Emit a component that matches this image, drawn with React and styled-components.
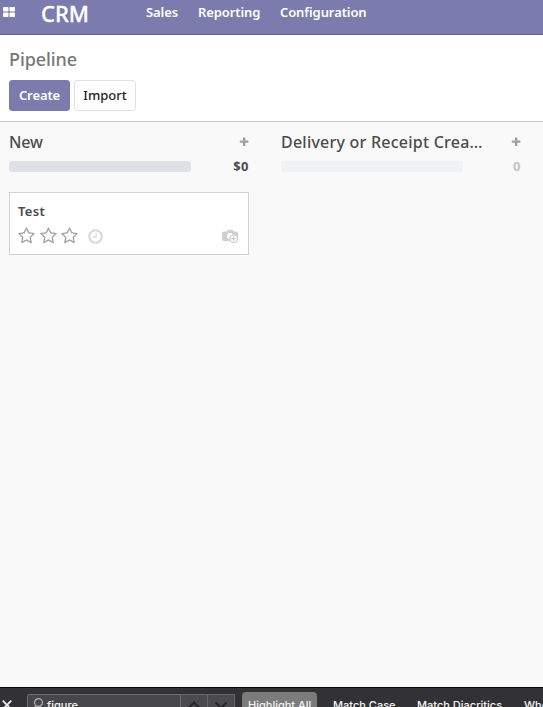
import React from "react";
import styled, { createGlobalStyle } from "styled-components";

const GlobalStyle = createGlobalStyle`
  * { box-sizing: border-box; }
  html, body { margin: 0; padding: 0; overflow: hidden; }
  body { font-family: "Noto Sans", "Open Sans", sans-serif; color: #4c4c4c; }
  svg { display: block; flex: none; }
`;

const Page = styled.div`
  display: flex;
  flex-direction: column;
  width: 543px;
  height: 707px;
  overflow: hidden;
  background: #f9f9f9;
`;

const Navbar = styled.header`
  display: flex;
  flex: none;
  height: 35px;
  padding-left: 3px;
  background: #7c7bad;
  border-bottom: 1px solid #5f5e97;
  color: #fff;
`;

const AppsIcon = styled.svg`
  margin-top: 7px;
`;

const Brand = styled.div`
  width: 105px;
  margin-left: 26px;
  font-size: 22px;
  font-weight: 500;
  line-height: 26px;
  -webkit-text-stroke: 0.3px #fff;
`;

const Menu = styled.nav`
  display: flex;
  gap: 20px;
`;

const MenuItem = styled.a`
  width: ${(p) => p.$width}px;
  font-size: 13px;
  font-weight: 600;
  line-height: 25px;
  letter-spacing: -0.1px;
  white-space: nowrap;
`;

const ControlPanel = styled.section`
  flex: none;
  height: 87px;
  padding: 11px 9px 0;
  background: #fff;
  border-bottom: 1px solid #c8c8cc;
`;

const Breadcrumb = styled.h1`
  margin: 0 0 8px;
  height: 26px;
  font-size: 18px;
  font-weight: 500;
  line-height: 26px;
  letter-spacing: -0.1px;
  color: #777;
`;

const Actions = styled.div`
  display: flex;
  gap: 4px;
`;

const Button = styled.button`
  display: flex;
  justify-content: center;
  width: ${(p) => p.$width}px;
  height: 31px;
  padding: 0;
  border: 1px solid ${(p) => (p.$primary ? "#7c7bad" : "#dee2e6")};
  border-radius: 3px;
  background: ${(p) => (p.$primary ? "#7c7bad" : "#fff")};
  color: ${(p) => (p.$primary ? "#fff" : "#212529")};
  font: ${(p) => (p.$primary ? 600 : 500)} 13px/28px "Noto Sans", sans-serif;
  letter-spacing: ${(p) => (p.$primary ? -0.1 : 0)}px;
`;

const Board = styled.main`
  display: flex;
  flex: 1;
  gap: 32px;
  min-height: 0;
  padding: 8px 9px 0;
`;

const Column = styled.section`
  flex: none;
  width: 240px;
`;

const ColumnHeader = styled.div`
  display: flex;
  align-items: center;
  justify-content: space-between;
  height: 24px;
`;

const ColumnTitle = styled.h2`
  margin: 0;
  font-size: 16px;
  font-weight: 500;
  line-height: 24px;
  letter-spacing: ${(p) => p.$spacing}px;
  white-space: nowrap;
`;

const Progress = styled.div`
  display: flex;
  align-items: center;
  justify-content: space-between;
  height: 25px;
`;

const Bar = styled.div`
  width: 182px;
  height: 11px;
  border-radius: 3px;
  background: ${(p) => (p.$empty ? "#f0f1f3" : "#dee2e6")};
`;

const Amount = styled.div`
  padding-bottom: 1px;
  font-size: 13px;
  font-weight: 700;
  line-height: 24px;
  letter-spacing: 0.5px;
  color: ${(p) => (p.$empty ? "#c4c4c4" : "#4c4c4c")};
`;

const Card = styled.article`
  height: 63px;
  margin-top: 13px;
  padding: 8px;
  background: #fff;
  border: 1px solid #ced4da;
`;

const CardTitle = styled.div`
  height: 20px;
  font-size: 13px;
  font-weight: 600;
  line-height: 20px;
  letter-spacing: 0.3px;
`;

const CardFooter = styled.div`
  display: flex;
  align-items: center;
  height: 30px;
`;

const Stars = styled.div`
  display: flex;
  gap: 4.7px;
  margin-right: 8.6px;
`;

const PhotoIcon = styled.svg`
  margin-left: auto;
  margin-right: 1px;
`;

const FindBar = styled.footer`
  display: flex;
  flex: none;
  height: 20px;
  border-top: 1px solid #080808;
  background: #323234;
  color: #f2f2f3;
  font: 500 11px/14px Inter, sans-serif;
`;

const CloseIcon = styled.svg`
  margin: 12px 15px 0 2px;
`;

const SearchBox = styled.div`
  display: flex;
  flex: none;
  width: 154px;
  height: 24px;
  margin-top: 6px;
  padding: 3px 0 0 5px;
  gap: 4px;
  border: 1px solid #707073;
  border-radius: 2px 0 0 2px;
  background: #474749;
`;

const StepButton = styled.div`
  display: flex;
  flex: none;
  justify-content: center;
  width: 27px;
  height: 24px;
  margin-top: 6px;
  padding-top: 5px;
  border: 1px solid #67676a;
  border-left: 0;
  background: #4b4b4d;
`;

const FindOption = styled.div`
  width: ${(p) => p.$width}px;
  height: 26px;
  flex: none;
  margin: 4px 0 0 ${(p) => p.$gap}px;
  padding: 6px 0 0 ${(p) => (p.$active ? 6 : 0)}px;
  border-radius: 4px;
  background: ${(p) => (p.$active ? "#7b7b7c" : "transparent")};
  white-space: nowrap;
`;

const Star = () => (
  <svg width="17" height="18" viewBox="0 0 1664 1792" fill="#a2a2a2">
    <path d="M1137 1004l306-297-422-62-189-382-189 382-422 62 306 297-73 421 378-199 377 199zm527-357q0 22-26 48l-363 354 86 500q1 7 1 20 0 50-41 50-19 0-40-12l-449-236-449 236q-22 12-40 12-21 0-31.500-14.500t-10.500-35.500q0-6 2-20l86-500-364-354q-25-27-25-48 0-37 56-46l502-73 225-455q19-41 49-41t49 41l225 455 502 73q56 9 56 46z" />
  </svg>
);

const Clock = () => (
  <svg width="17" height="17" viewBox="0 0 1792 1792" fill="#d9d9d9">
    <path d="M1024 544v448q0 14-9 23t-23 9h-320q-14 0-23-9t-9-23v-64q0-14 9-23t23-9h224v-352q0-14 9-23t23-9h64q14 0 23 9t9 23zm416 352q0-148-73-273t-198-198-273-73-273 73-198 198-73 273 73 273 198 198 273 73 273-73 198-198 73-273zm224 0q0 209-103 385.500t-279.500 279.500-385.500 103-385.500-103-279.500-279.500-103-385.500 103-385.500 279.500-279.500 385.500-103 385.500 103 279.500 279.500 103 385.500z" />
  </svg>
);

const Plus = () => (
  <svg width="10" height="10" viewBox="0 0 10 10" fill="#a0a0a0">
    <path d="M4.400 .5h1.600q.4 0 .4.4v2.600h2.600q.4 0 .4.4v1.400q0 .4-.4.4H6.400v2.900q0 .4-.4.4H4.400q-.4 0-.4-.4V5.700H1.200q-.4 0-.4-.4V3.900q0-.4.4-.4H4V.9q0-.4.4-.4z" />
  </svg>
);

const Photo = () => (
  <PhotoIcon width="17" height="15" viewBox="0 0 17 15">
    <path d="M2 2.500h2.500L5.600.8h5l1.100 1.700H14q2 0 2 2V10q0 2-2 2H2q-2 0-2-2V4.500q0-2 2-2z" fill="#cfcfcf" />
    <circle cx="8" cy="7" r="2.900" fill="#fff" />
    <circle cx="11.700" cy="9.700" r="3.900" fill="#fff" stroke="#c6c6c6" />
    <path d="M11.700 7.200v5M9.200 9.700h5" stroke="#c2c2c2" strokeWidth="1" />
  </PhotoIcon>
);

const Chevron = ({ up }) => (
  <svg width="14" height="12" viewBox="0 0 14 12" fill="none" stroke="#252527" strokeWidth="2">
    <path d={up ? "M1.500 8 7 2.500 12.500 8" : "M1.500 2.500 7 8l5.500-5.500"} />
  </svg>
);

export default function App() {
  return (
    <Page>
      <GlobalStyle />
      <Navbar>
        <AppsIcon width="12" height="10" viewBox="0 0 12 10" fill="#fff">
          <rect width="5.500" height="4.500" rx=".8" />
          <rect x="6.500" width="5.500" height="4.500" rx=".8" />
          <rect y="5.500" width="5.500" height="4.500" rx=".8" />
          <rect x="6.500" y="5.500" width="5.500" height="4.500" rx=".8" />
        </AppsIcon>
        <Brand>CRM</Brand>
        <Menu>
          <MenuItem $width={32}>Sales</MenuItem>
          <MenuItem $width={62}>Reporting</MenuItem>
          <MenuItem $width={88}>Configuration</MenuItem>
        </Menu>
      </Navbar>
      <ControlPanel>
        <Breadcrumb>Pipeline</Breadcrumb>
        <Actions>
          <Button $primary $width={61}>Create</Button>
          <Button $width={62}>Import</Button>
        </Actions>
      </ControlPanel>
      <Board>
        <Column>
          <ColumnHeader>
            <ColumnTitle $spacing={-0.2}>New</ColumnTitle>
            <Plus />
          </ColumnHeader>
          <Progress>
            <Bar />
            <Amount>$0</Amount>
          </Progress>
          <Card>
            <CardTitle>Test</CardTitle>
            <CardFooter>
              <Stars>
                <Star />
                <Star />
                <Star />
              </Stars>
              <Clock />
              <Photo />
            </CardFooter>
          </Card>
        </Column>
        <Column>
          <ColumnHeader>
            <ColumnTitle $spacing={0.23}>Delivery or Receipt Crea…</ColumnTitle>
            <Plus />
          </ColumnHeader>
          <Progress>
            <Bar $empty />
            <Amount $empty>0</Amount>
          </Progress>
        </Column>
      </Board>
      <FindBar>
        <CloseIcon width="10" height="10" viewBox="0 0 10 10" stroke="#f2f2f3" strokeWidth="1.700">
          <path d="M.7.700l8.600 8.600M9.300.7.700 9.300" />
        </CloseIcon>
        <SearchBox>
          <svg width="10" height="12" viewBox="0 0 10 12" fill="none" stroke="#b5b5b6" strokeWidth="1.200">
            <circle cx="5.500" cy="4.500" r="3.900" />
            <path d="M3 7.500.5 11" />
          </svg>
          figure
        </SearchBox>
        <StepButton><Chevron up /></StepButton>
        <StepButton><Chevron /></StepButton>
        <FindOption $active $width={75} $gap={7}>Highlight All</FindOption>
        <FindOption $width={62} $gap={16}>Match Case</FindOption>
        <FindOption $width={85} $gap={22}>Match Diacritics</FindOption>
        <FindOption $width={80} $gap={22}>Whole Words</FindOption>
      </FindBar>
    </Page>
  );
}
